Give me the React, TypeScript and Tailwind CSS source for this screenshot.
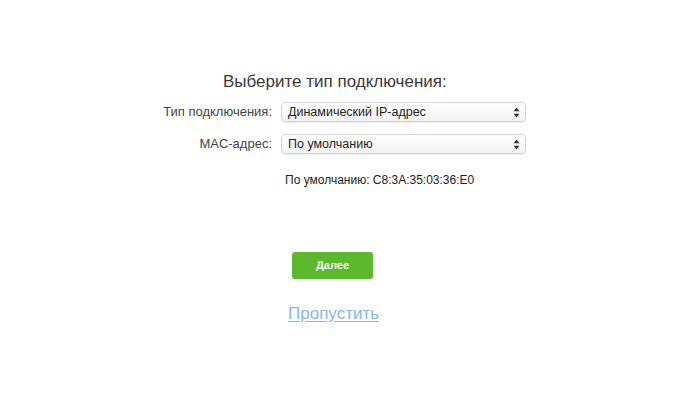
export default function App() {
  return (
    <div
      className="w-[700px] h-[414px] bg-white text-[#333]"
      style={{ fontFamily: '"Liberation Sans", Arial, sans-serif' }}
    >
      <div className="pt-[72px] pl-[223px]">
        <h1 className="text-[17px] leading-[20px] text-[#3a3a3a]">Выберите тип подключения:</h1>
      </div>

      <div className="mt-[10px] flex flex-col gap-[12px]">
        <Row label="Тип подключения:" value="Динамический IP-адрес" />
        <Row label="MAC-адрес:" value="По умолчанию" />
      </div>

      <p className="mt-[18px] pl-[285px] text-[12px] leading-[16px] text-[#222]">
        По умолчанию: C8:3A:35:03:36:E0
      </p>

      <div className="mt-[64px] pl-[292px]">
        <button className="w-[81px] h-[27px] rounded-[3px] bg-[#5cb82c] text-white text-[11px] font-bold">
          Далее
        </button>
      </div>

      <div className="mt-[23px] pl-[288px]">
        <a className="text-[17px] leading-[20px] text-[#86b8e9] underline underline-offset-[2px] cursor-pointer">
          Пропустить
        </a>
      </div>
    </div>
  );
}

function Row({ label, value }: { label: string; value: string }) {
  return (
    <div className="flex items-center">
      <span className="w-[273px] pr-[1px] text-right text-[13px] text-[#444]">{label}</span>
      <div className="ml-[8px] w-[245px] h-[20px] flex items-center justify-between rounded-[4px] border border-[#d4d4d4] bg-gradient-to-b from-white to-[#f3f3f3] shadow-[0_1px_1px_rgba(0,0,0,0.08)] pl-[6px] pr-[5px]">
        <span className="text-[12.5px] text-[#222]">{value}</span>
        <svg width="7" height="11" viewBox="0 0 7 11">
          <path d="M3.5 0.5 L6.5 4.2 H0.5 Z" fill="#333" />
          <path d="M3.5 10.5 L6.5 6.8 H0.5 Z" fill="#333" />
        </svg>
      </div>
    </div>
  );
}
